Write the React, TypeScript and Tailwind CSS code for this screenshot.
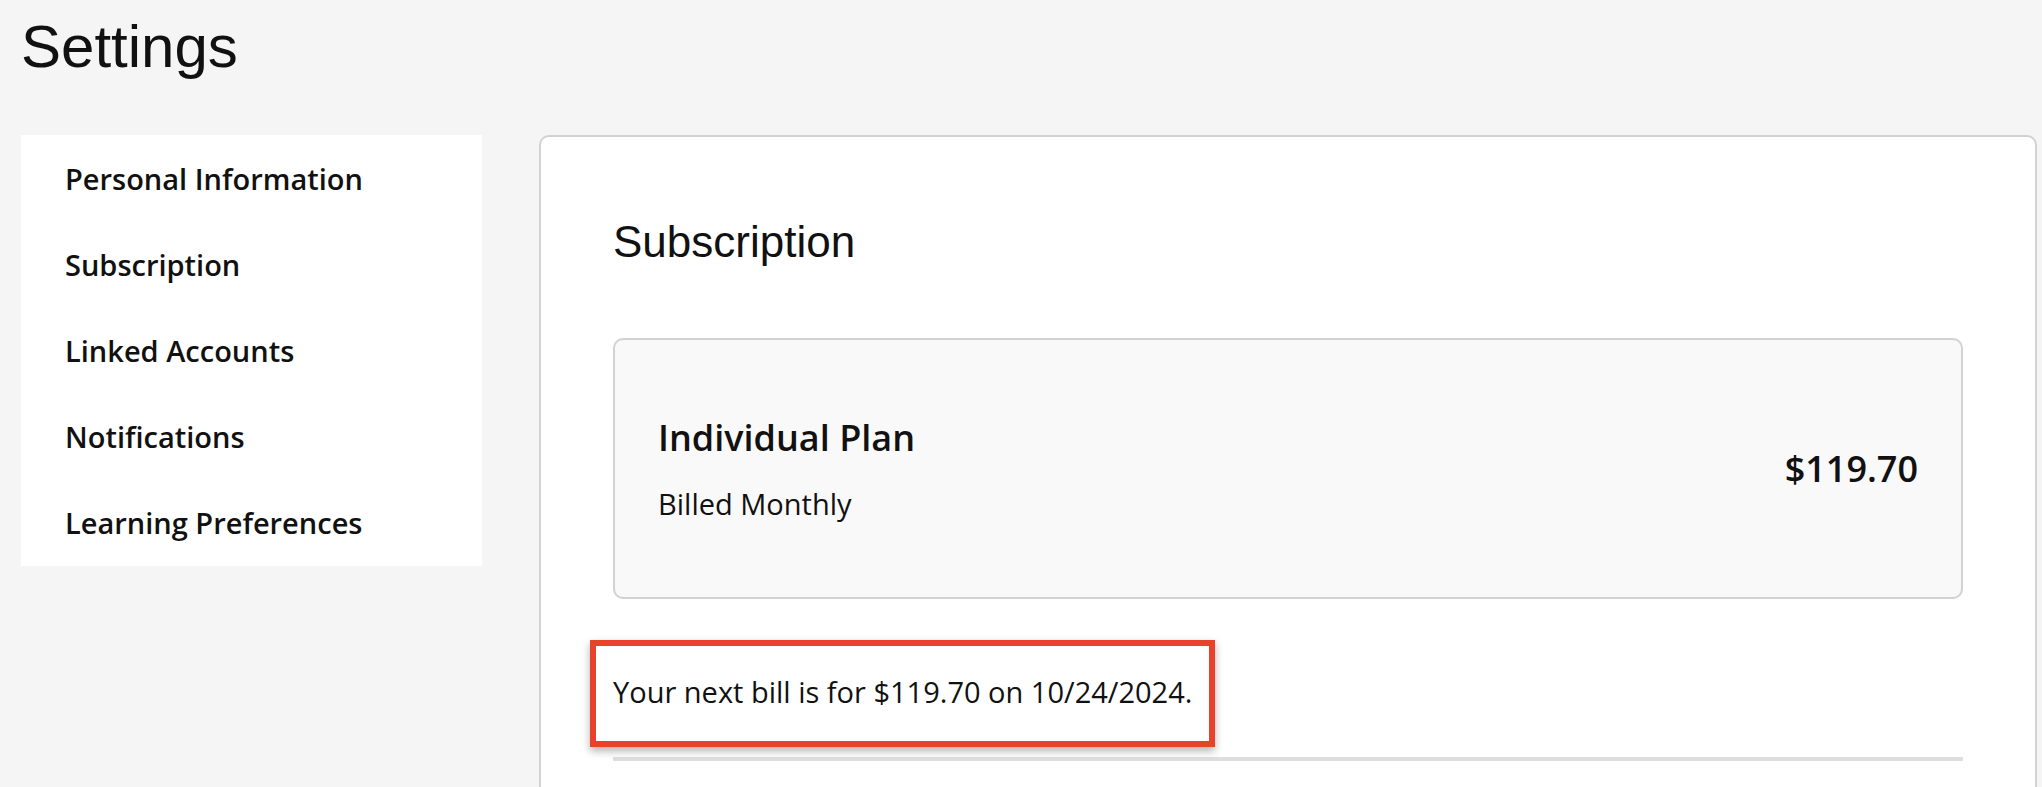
import React from 'react';

const navItems = [
  'Personal Information',
  'Subscription',
  'Linked Accounts',
  'Notifications',
  'Learning Preferences',
];

const sans = "font-['Open_Sans','Noto_Sans',sans-serif]";
const grotesk = "font-['Liberation_Sans',Arial,sans-serif]";

export default function App() {
  return (
    <div className="min-h-screen bg-[#f5f5f5] pl-[21px] pr-[5px] pt-[11px] text-[#111]">
      <h1 className={`${grotesk} text-[60px] leading-[72px] font-normal`}>Settings</h1>

      <div className="mt-[52px] flex items-start gap-[57px]">
        {/* Side navigation */}
        <nav className={`${sans} w-[461px] shrink-0 bg-white pt-px`}>
          {navItems.map((item) => (
            <div key={item} className="h-[86px] pl-[44px] text-[29px] leading-[86px] font-semibold">
              {item}
            </div>
          ))}
        </nav>

        {/* Main panel */}
        <main className="flex-1 min-h-[652px] rounded-t-[10px] border-2 border-b-0 border-[#d2d2d2] bg-white px-[72px] pt-[81px]">
          <h2 className={`${grotesk} text-[44px] leading-[48px] font-normal`}>Subscription</h2>

          <div className={`${sans} mt-[72px] flex h-[261px] items-center justify-between rounded-[10px] border-2 border-[#d2d2d2] bg-[#f9f9f9] px-[43px]`}>
            <div className="flex flex-col gap-[22px]">
              <div className="text-[36px] leading-[48px] font-semibold">Individual Plan</div>
              <div className="text-[29px] leading-[40px]">Billed Monthly</div>
            </div>
            <div className="text-[36px] leading-[48px] font-semibold">$119.70</div>
          </div>

          <div className={`${sans} relative mt-[73px] text-[29px] leading-[40px]`}>
            <p>Your next bill is for $119.70 on 10/24/2024.</p>
            {/* highlight annotation */}
            <div className="pointer-events-none absolute -left-[23px] -top-[32px] h-[107px] w-[625px] border-[6px] border-[#e8432a] shadow-[0_4px_8px_rgba(0,0,0,0.3)]" />
          </div>

          <div className="mt-[45px] h-[4px] bg-[#dedede]" />
        </main>
      </div>
    </div>
  );
}
